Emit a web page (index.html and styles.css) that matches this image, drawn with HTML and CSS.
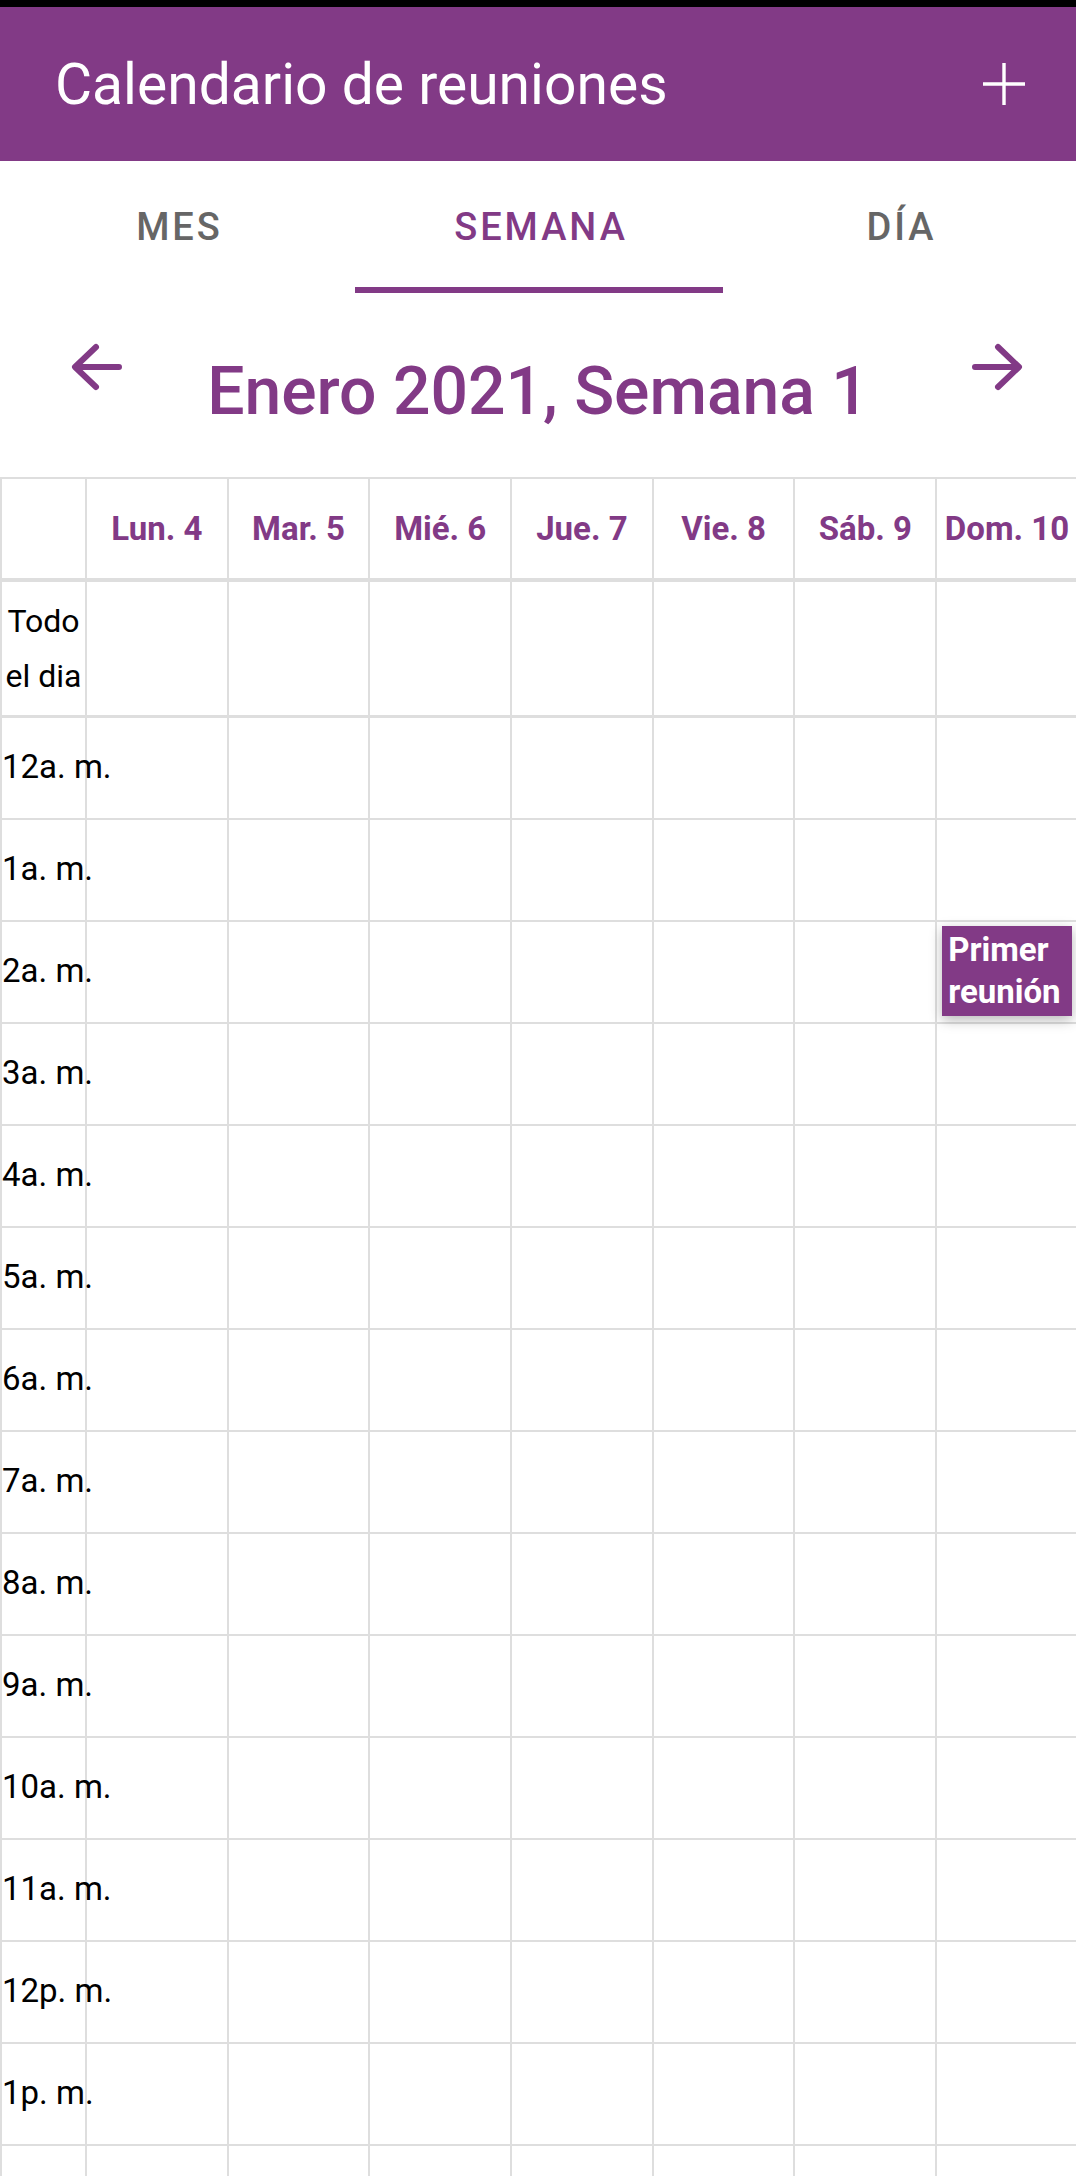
FILE: index.html
```html
<!DOCTYPE html>
<html lang="es">
<head>
<meta charset="utf-8">
<title>Calendario de reuniones</title>
<link rel="stylesheet" href="styles.css">
</head>
<body>
<div class="app">
  <div class="statusbar"></div>
  <header class="appbar">
    <h1 class="appbar-title">Calendario de reuniones</h1>
    <button class="icon-btn" aria-label="Agregar">
      <svg width="44" height="44" viewBox="0 0 44 44"><path d="M22 1V43M1 22H43" stroke="#fff" stroke-width="3.4" fill="none"/></svg>
    </button>
  </header>
  <nav class="tabs">
    <div class="tab">MES</div>
    <div class="tab active">SEMANA</div>
    <div class="tab">DÍA</div>
  </nav>
  <div class="week-nav">
    <button class="nav-btn prev" aria-label="Semana anterior">
      <svg width="54" height="52" viewBox="0 0 54 52"><path d="M49 26H6M26 6L5 26L26 46" stroke="#823a86" stroke-width="6" stroke-linecap="round" stroke-linejoin="round" fill="none"/></svg>
    </button>
    <h2 class="week-title">Enero 2021, Semana 1</h2>
    <button class="nav-btn next" aria-label="Semana siguiente">
      <svg width="54" height="52" viewBox="0 0 54 52"><path d="M5 26H48M28 6L49 26L28 46" stroke="#823a86" stroke-width="6" stroke-linecap="round" stroke-linejoin="round" fill="none"/></svg>
    </button>
  </div>
  <div class="schedule">
    <div class="cell head first"></div>
    <div class="cell head">Lun. 4</div>
    <div class="cell head">Mar. 5</div>
    <div class="cell head">Mié. 6</div>
    <div class="cell head">Jue. 7</div>
    <div class="cell head">Vie. 8</div>
    <div class="cell head">Sáb. 9</div>
    <div class="cell head">Dom. 10</div>

    <div class="cell allday first">Todo el dia</div>
    <div class="cell allday"></div><div class="cell allday"></div><div class="cell allday"></div><div class="cell allday"></div><div class="cell allday"></div><div class="cell allday"></div><div class="cell allday"></div>

    <div class="cell hour first">12a. m.</div>
    <div class="cell"></div><div class="cell"></div><div class="cell"></div><div class="cell"></div><div class="cell"></div><div class="cell"></div><div class="cell"></div>

    <div class="cell hour first">1a. m.</div>
    <div class="cell"></div><div class="cell"></div><div class="cell"></div><div class="cell"></div><div class="cell"></div><div class="cell"></div><div class="cell"></div>

    <div class="cell hour first">2a. m.</div>
    <div class="cell"></div><div class="cell"></div><div class="cell"></div><div class="cell"></div><div class="cell"></div><div class="cell"></div>
    <div class="cell"><div class="event">Primer reunión</div></div>

    <div class="cell hour first">3a. m.</div>
    <div class="cell"></div><div class="cell"></div><div class="cell"></div><div class="cell"></div><div class="cell"></div><div class="cell"></div><div class="cell"></div>

    <div class="cell hour first">4a. m.</div>
    <div class="cell"></div><div class="cell"></div><div class="cell"></div><div class="cell"></div><div class="cell"></div><div class="cell"></div><div class="cell"></div>

    <div class="cell hour first">5a. m.</div>
    <div class="cell"></div><div class="cell"></div><div class="cell"></div><div class="cell"></div><div class="cell"></div><div class="cell"></div><div class="cell"></div>

    <div class="cell hour first">6a. m.</div>
    <div class="cell"></div><div class="cell"></div><div class="cell"></div><div class="cell"></div><div class="cell"></div><div class="cell"></div><div class="cell"></div>

    <div class="cell hour first">7a. m.</div>
    <div class="cell"></div><div class="cell"></div><div class="cell"></div><div class="cell"></div><div class="cell"></div><div class="cell"></div><div class="cell"></div>

    <div class="cell hour first">8a. m.</div>
    <div class="cell"></div><div class="cell"></div><div class="cell"></div><div class="cell"></div><div class="cell"></div><div class="cell"></div><div class="cell"></div>

    <div class="cell hour first">9a. m.</div>
    <div class="cell"></div><div class="cell"></div><div class="cell"></div><div class="cell"></div><div class="cell"></div><div class="cell"></div><div class="cell"></div>

    <div class="cell hour first">10a. m.</div>
    <div class="cell"></div><div class="cell"></div><div class="cell"></div><div class="cell"></div><div class="cell"></div><div class="cell"></div><div class="cell"></div>

    <div class="cell hour first">11a. m.</div>
    <div class="cell"></div><div class="cell"></div><div class="cell"></div><div class="cell"></div><div class="cell"></div><div class="cell"></div><div class="cell"></div>

    <div class="cell hour first">12p. m.</div>
    <div class="cell"></div><div class="cell"></div><div class="cell"></div><div class="cell"></div><div class="cell"></div><div class="cell"></div><div class="cell"></div>

    <div class="cell hour first">1p. m.</div>
    <div class="cell"></div><div class="cell"></div><div class="cell"></div><div class="cell"></div><div class="cell"></div><div class="cell"></div><div class="cell"></div>

    <div class="cell hour first"></div>
    <div class="cell"></div><div class="cell"></div><div class="cell"></div><div class="cell"></div><div class="cell"></div><div class="cell"></div><div class="cell"></div>
  </div>
</div>
</body>
</html>
```
FILE: styles.css
```css
* {
  box-sizing: border-box;
}

html, body {
  margin: 0;
  padding: 0;
  background: #ffffff;
}

body {
  font-family: Roboto, "Noto Sans", "Liberation Sans", sans-serif;
  color: #000000;
}

.app {
  width: 1076px;
  height: 100vh;
  overflow: hidden;
  background: #ffffff;
}

.statusbar {
  height: 7px;
  background: #000000;
}

.appbar {
  height: 154px;
  background: #823a86;
  display: flex;
  align-items: center;
  justify-content: space-between;
  padding: 0 50px 0 55px;
}

.appbar-title {
  margin: 0;
  font-size: 57px;
  font-weight: 400;
  color: #ffffff;
  line-height: 1;
}

.icon-btn,
.nav-btn {
  background: none;
  border: 0;
  padding: 0;
  margin: 0;
  display: block;
  cursor: pointer;
}

.icon-btn svg,
.nav-btn svg {
  display: block;
}

.tabs {
  height: 132px;
  display: grid;
  grid-template-columns: 355px 368px 353px;
}

.tab {
  position: relative;
  display: flex;
  align-items: center;
  justify-content: center;
  padding-left: 4px;
  font-size: 38px;
  font-weight: 500;
  letter-spacing: 3px;
  color: #666666;
}

.tab.active {
  color: #823a86;
}

.tab.active::after {
  content: "";
  position: absolute;
  left: 0;
  right: 0;
  bottom: 0;
  height: 6px;
  background: #823a86;
}

.week-nav {
  height: 184px;
  padding-top: 48px;
  display: grid;
  grid-template-columns: 1fr auto 1fr;
  align-items: start;
}

.nav-btn.prev {
  justify-self: start;
  margin-left: 70px;
}

.nav-btn.next {
  justify-self: end;
  margin-right: 52px;
}

.week-title {
  margin: 11px 0 0;
  font-size: 66px;
  font-weight: 500;
  line-height: 80px;
  color: #823a86;
  white-space: nowrap;
}

.schedule {
  width: 1079px;
  display: grid;
  grid-template-columns: 87px repeat(7, 141.7px);
  grid-template-rows: 105px 136px;
  grid-auto-rows: 102px;
}

.cell {
  border-right: 2px solid #dedede;
  border-bottom: 2px solid #dedede;
  min-width: 0;
}

.cell.first {
  border-left: 2px solid #dedede;
}

.cell.head {
  border-top: 2px solid #dedede;
  border-bottom-width: 4px;
  display: flex;
  align-items: center;
  justify-content: center;
  font-size: 33px;
  font-weight: 700;
  color: #823a86;
  white-space: nowrap;
}

.cell.allday {
  border-bottom-width: 3px;
}

.cell.allday.first {
  display: flex;
  align-items: center;
  justify-content: center;
  text-align: center;
  font-size: 32px;
  line-height: 55px;
}

.cell.hour {
  display: flex;
  align-items: center;
  padding-bottom: 3px;
  font-size: 33px;
  white-space: nowrap;
  position: relative;
  z-index: 1;
}

.event {
  position: relative;
  z-index: 2;
  margin: 4px 5px 0 5px;
  padding: 3px 6px 3px;
  background: #823a86;
  color: #ffffff;
  font-size: 33px;
  font-weight: 700;
  line-height: 42px;
  box-shadow: 0 4px 12px rgba(0, 0, 0, 0.28);
}
```
